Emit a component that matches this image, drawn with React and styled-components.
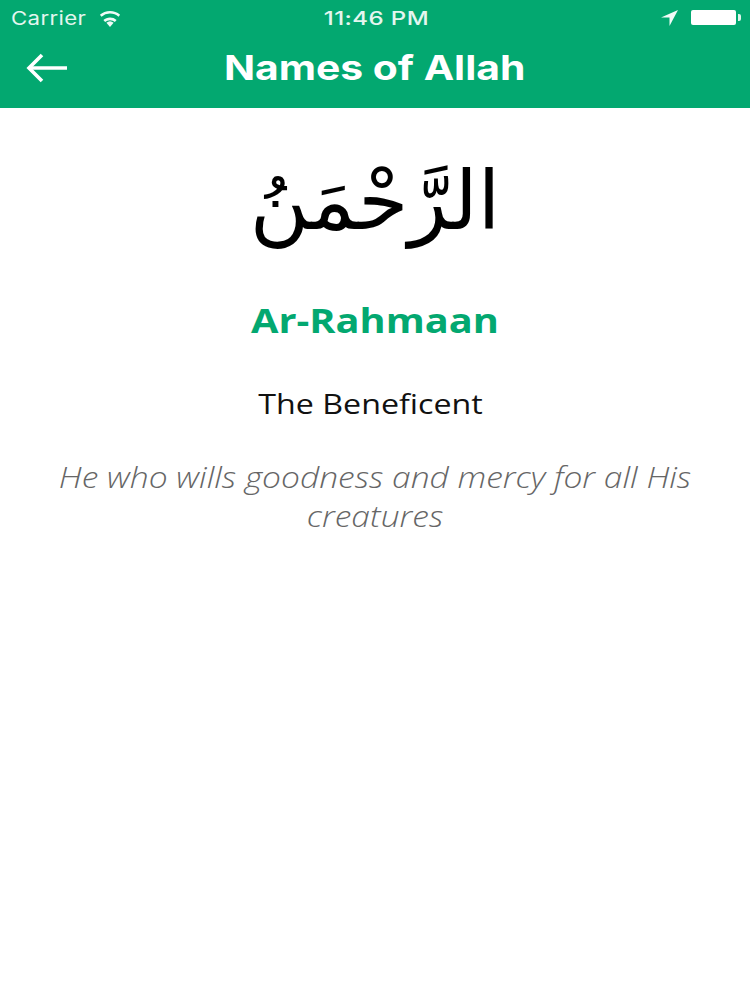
import React from 'react';
import styled, { createGlobalStyle } from 'styled-components';

const GlobalStyle = createGlobalStyle`
    html, body {
        margin: 0;
        padding: 0;
        background: #fff;
    }
`

const Screen = styled.div`
    width: 750px;
    height: 1000px;
    background: #fff;
    overflow: hidden;
    display: flex;
    flex-direction: column;
    font-family: "Open Sans", sans-serif;
`

const Header = styled.header`
    height: 108px;
    background: #03a870;
    color: #fff;
    display: flex;
    flex-direction: column;
    flex-shrink: 0;
`

const StatusBar = styled.div`
    height: 35px;
    padding: 0 9px 0 11px;
    display: grid;
    grid-template-columns: 1fr auto 1fr;
    align-items: center;
    font-family: Inter, sans-serif;
    font-size: 18.5px;
    letter-spacing: 0.3px;
    color: #e4f6ef;
`

const StatusLeft = styled.div`
    display: flex;
    align-items: center;
    gap: 23px;
`

const StatusRight = styled.div`
    display: flex;
    align-items: center;
    justify-content: flex-end;
    gap: 12px;
`

// the whole reference is stretched sideways, so the text is too
const Carrier = styled.span`
    transform: scaleX(1.2);
    transform-origin: left center;
`

const Clock = styled.span`
    font-weight: 500;
    transform: scaleX(1.3);
`

const Battery = styled.div`
    width: 45px;
    height: 15px;
    background: #fff;
    border-radius: 2px;
    margin-right: 5px;
    position: relative;

    &::after {
        content: '';
        position: absolute;
        right: -5px;
        top: 4px;
        width: 3px;
        height: 7px;
        background: #dff5ec;
        border-radius: 0 2px 2px 0;
    }
`

const NavBar = styled.nav`
    flex: 1;
    display: grid;
    grid-template-columns: 1fr auto 1fr;
    align-items: center;
    padding-bottom: 8px;
`

const BackButton = styled.button`
    background: none;
    border: none;
    padding: 0 0 0 26px;
    display: flex;
    justify-self: start;
    cursor: pointer;
`

const Title = styled.h1`
    margin: 0;
    font-family: Inter, sans-serif;
    font-size: 34px;
    font-weight: 700;
    transform: scaleX(1.2);
`

const Content = styled.main`
    display: flex;
    flex-direction: column;
    align-items: center;
    text-align: center;
`

const Arabic = styled.div`
    margin-top: 28px;
    font-family: "DejaVu Sans", sans-serif;
    font-size: 81px;
    line-height: 130px;
    color: #000;
`

const Name = styled.h2`
    margin: 31px 0 0;
    font-size: 34px;
    line-height: 46px;
    font-weight: 700;
    color: #03a870;
    transform: scaleX(1.17);
`

const Meaning = styled.div`
    margin: 41px 8px 0 0;
    font-size: 28px;
    line-height: 38px;
    color: #111;
    transform: scaleX(1.15);
`

const Description = styled.p`
    margin: 36px 0 0;
    width: 550px;
    font-size: 28.5px;
    font-style: italic;
    font-weight: 300;
    line-height: 39px;
    color: #666;
    transform: scaleX(1.178);
`

const WifiIcon = () => (
    <svg width="26" height="18" viewBox="0 0 26 18" fill="#f1fbf7">
        <path d="M13 18l-3.6-4.2a5.6 5.6 0 0 1 7.2 0z" />
        <path d="M13 8.6c-2.6 0-4.9.9-6.6 2.4l1.7 2a7.6 7.6 0 0 1 9.8 0l1.7-2A10 10 0 0 0 13 8.6z" />
        <path d="M13 3.6c-3.9 0-7.5 1.4-10.1 3.7l1.6 1.9A12.9 12.9 0 0 1 13 6.1c3.2 0 6.2 1.2 8.5 3.1l1.6-1.9A15.5 15.5 0 0 0 13 3.6z" transform="translate(0 -1.5)" />
    </svg>
)

const LocationIcon = () => (
    <svg width="18" height="18" viewBox="0 0 18 18" fill="#f1fbf7">
        <path d="M17 1L0 8.5h8.5V17z" />
    </svg>
)

const BackArrow = () => (
    <svg width="42" height="30" viewBox="0 0 42 30" fill="none" stroke="#fff" strokeWidth="3.6">
        <path d="M41 15H3" />
        <path d="M16 2L3 15l13 13" />
    </svg>
)

const App = () => {
    return (
        <Screen>
            <GlobalStyle />
            <Header>
                <StatusBar>
                    <StatusLeft>
                        <Carrier>Carrier</Carrier>
                        <WifiIcon />
                    </StatusLeft>
                    <Clock>11:46 PM</Clock>
                    <StatusRight>
                        <LocationIcon />
                        <Battery />
                    </StatusRight>
                </StatusBar>
                <NavBar>
                    <BackButton><BackArrow /></BackButton>
                    <Title>Names of Allah</Title>
                </NavBar>
            </Header>
            <Content>
                <Arabic lang="ar" dir="rtl">الرَّحْمَنُ</Arabic>
                <Name>Ar-Rahmaan</Name>
                <Meaning>The Beneficent</Meaning>
                <Description>He who wills goodness and mercy for all His creatures</Description>
            </Content>
        </Screen>
    )
}

export default App;
